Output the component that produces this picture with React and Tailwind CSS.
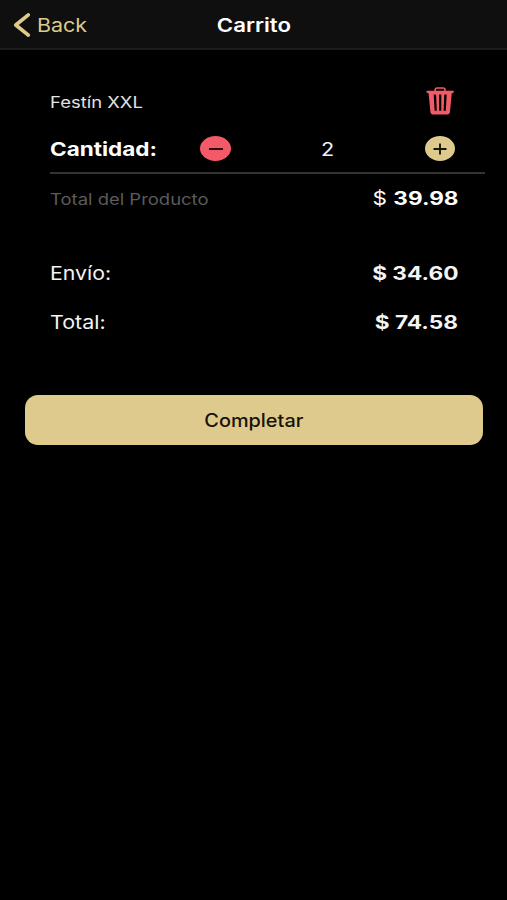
function TrashIcon() {
  return (
    <svg className="mb-[2px] block h-[28px] w-[28px]" viewBox="0 0 28 28" fill="none">
      <path d="M9.200 4V2.800Q9.200 1 11.100 1h6q1.900 0 1.900 1.800V4" stroke="#f25a68" strokeWidth="1.600" />
      <path
        fillRule="evenodd"
        fill="#f25a68"
        d="M.5 3.800h27.200V5.600L25.700 6.400 24 24.800Q23.700 27.600 20.900 27.600H7.400Q4.700 27.600 4.400 24.800L2.600 6.400.5 5.600ZM7.700 7.600l.9 16.200h2.200L10.100 7.600ZM13.100 7.600v16.200h2.200V7.600ZM18.300 7.600l-.7 16.200h2.200l.9-16.200Z"
      />
    </svg>
  );
}

function SummaryRow({ label, labelScale, amount, amountScale }) {
  return (
    <div className="flex h-[49px] items-center justify-between text-[18.500px] text-[#f4f4f4]">
      <span className={`origin-left ${labelScale}`}>{label}</span>
      <span className={`origin-right font-bold ${amountScale}`}>{amount}</span>
    </div>
  );
}

export default function App() {
  return (
    <div className="h-[900px] w-[507px] overflow-hidden bg-black font-['Inter',sans-serif] whitespace-nowrap text-white">
      <header className="grid h-[50px] grid-cols-3 items-center border-b-2 border-[#1c1c1c] bg-[#0f0f0f] pt-[2px]">
        <button className="flex items-center pl-[13px] text-[#dfca8d]">
          <svg className="h-[26px] w-[18px]" viewBox="0 0 18 26" fill="none" stroke="currentColor" strokeWidth="3.700" strokeLinecap="round" strokeLinejoin="round">
            <path d="M15.300 2.900 2.800 13l12.500 10.100" />
          </svg>
          <span className="ml-[6px] origin-left scale-x-[1.160] pt-[2px] text-[18.500px]">Back</span>
        </button>
        <h1 className="pt-[2px] text-center text-[18.500px] font-semibold">
          <span className="inline-block scale-x-[1.200]">Carrito</span>
        </h1>
      </header>

      <main className="pt-[34px]">
        <section className="pr-[22px] pl-[50px]">
          <div className="flex h-[36px] items-center justify-between pr-[31px]">
            <span className="origin-left scale-x-[1.190] pt-[2px] text-[15.500px] text-[#e4e4e4]">Festín XXL</span>
            <TrashIcon />
          </div>
          <div className="flex h-[54px] items-center border-b-2 border-[#333333] pt-[5px]">
            <span className="w-[150px] pt-[3px] text-[19px] font-bold">
              <span className="inline-block origin-left scale-x-[1.185]">Cantidad:</span>
            </span>
            <button className="flex h-[25px] w-[31px] items-center justify-center rounded-[50%] bg-[#f25a68]">
              <span className="h-[2px] w-[14px] bg-[#281014]" />
            </button>
            <span className="w-[194px] pt-[3px] text-center text-[18.500px] text-[#f0f0f0]">
              <span className="inline-block scale-x-[1.170]">2</span>
            </span>
            <button className="flex h-[25px] w-[30px] items-center justify-center rounded-[50%] bg-[#dfca8d]">
              <svg className="h-[12px] w-[14px]" viewBox="0 0 14 12" stroke="#19160d" strokeWidth="1.900">
                <path d="M.5 6h13M7 .5v11" />
              </svg>
            </button>
          </div>
          <div className="flex h-[50px] items-center justify-between pr-[27px]">
            <span className="origin-left scale-x-[1.190] pt-[2px] text-[15.500px] text-[#5b5b5b]">Total del Producto</span>
            <span className="origin-right scale-x-[1.220] text-[18.500px]">
              $ <b>39.98</b>
            </span>
          </div>
        </section>

        <section className="pt-[25px] pr-[49px] pl-[50px]">
          <SummaryRow label="Envío:" labelScale="scale-x-[1.150]" amount="$ 34.60" amountScale="scale-x-[1.225]" />
          <SummaryRow label="Total:" labelScale="scale-x-[1.160]" amount="$ 74.58" amountScale="scale-x-[1.225]" />
        </section>

        <div className="pt-[48px] pr-[24px] pl-[25px]">
          <button className="flex h-[50px] w-full items-center justify-center rounded-[13px] bg-[#dfca8d] text-[18px] font-medium text-[#17130a]">
            <span className="scale-x-[1.105]">Completar</span>
          </button>
        </div>
      </main>
    </div>
  );
}
